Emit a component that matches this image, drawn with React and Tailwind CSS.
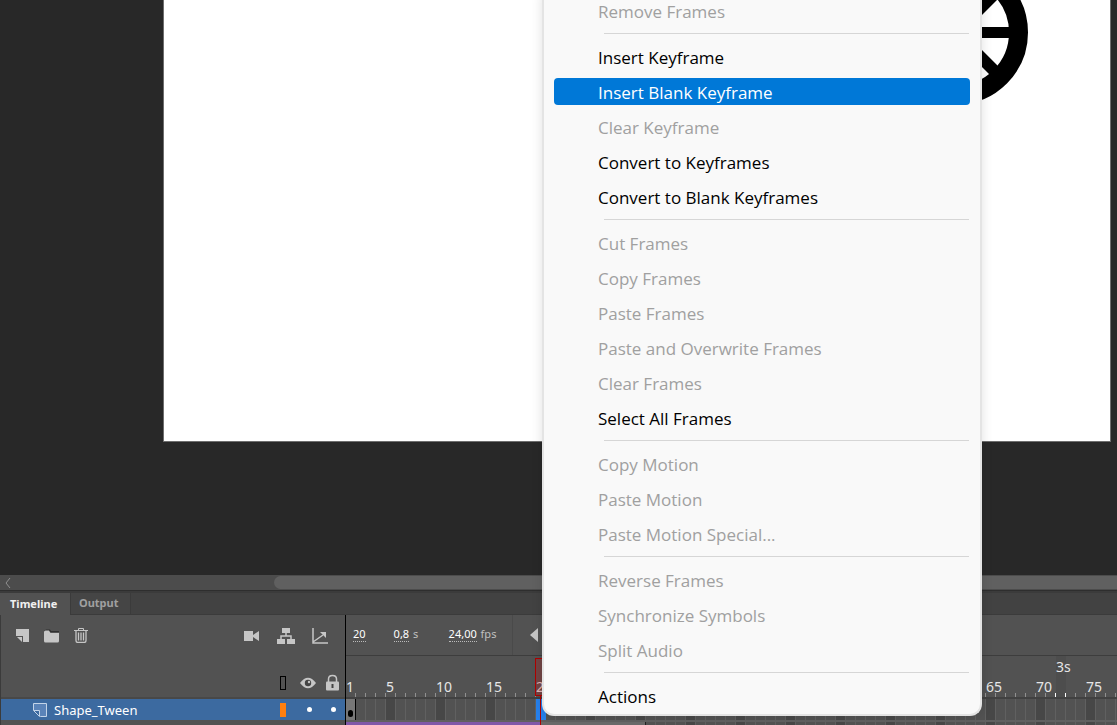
const menuGroups = [
  [{ label: 'Remove Frames', disabled: true }],
  [
    { label: 'Insert Keyframe' },
    { label: 'Insert Blank Keyframe', active: true },
    { label: 'Clear Keyframe', disabled: true },
    { label: 'Convert to Keyframes' },
    { label: 'Convert to Blank Keyframes' },
  ],
  [
    { label: 'Cut Frames', disabled: true },
    { label: 'Copy Frames', disabled: true },
    { label: 'Paste Frames', disabled: true },
    { label: 'Paste and Overwrite Frames', disabled: true },
    { label: 'Clear Frames', disabled: true },
    { label: 'Select All Frames' },
  ],
  [
    { label: 'Copy Motion', disabled: true },
    { label: 'Paste Motion', disabled: true },
    { label: 'Paste Motion Special...', disabled: true },
  ],
  [
    { label: 'Reverse Frames', disabled: true },
    { label: 'Synchronize Symbols', disabled: true },
    { label: 'Split Audio', disabled: true },
  ],
  [{ label: 'Actions' }],
];

const frames = Array.from({ length: 78 }, (_, i) => i + 1);

const ContextMenu = () => (
  <div
    role="menu"
    className="absolute bottom-[9px] left-[542px] w-[440px] rounded-b-xl border-2 border-t-0 border-[#e4e4e4] bg-[#f9f9f9] shadow-[0_0_12px_rgba(0,0,0,0.12)] font-['Open_Sans','Noto_Sans',sans-serif]"
  >
    {menuGroups.map((group, idx) => (
      <div key={idx} role="group">
        {idx > 0 && (
          <div className="h-[11px] pt-[5px] pl-[60px] pr-[11px]">
            <div className="h-px bg-[#d6d6d6]" />
          </div>
        )}
        {group.map((item) => (
          <div key={item.label} className="h-[35px] px-2.5 py-1">
            <button
              type="button"
              role="menuitem"
              disabled={item.disabled}
              className={`flex h-[27px] w-full items-center rounded pl-11 pt-0.5 text-left text-[17px] leading-6 ${
                item.active ? 'bg-[#0078d7] text-white' :
                item.disabled ? 'text-[#a0a0a0]' :
                'text-black'
              }`}
            >
              {item.label}
            </button>
          </div>
        ))}
      </div>
    ))}
    <div className="h-px" />
  </div>
);

const Stage = () => (
  <main className="min-h-0 flex-1 bg-[#282828] pl-[163px] pr-1.5">
    <div className="h-[442px] overflow-hidden border-b border-l border-r border-[#6e6e6e] bg-white">
      <svg className="ml-[719px] h-[106px] w-[150px]" viewBox="883 0 150 106" fill="none" stroke="#000" aria-hidden="true">
        <circle cx="956" cy="32.5" r="62.5" strokeWidth="19" />
        <path d="M896 32.5H1016" strokeWidth="11" />
        <path d="M956 -28V93M914 -9.5L998 74.5M998 -9.5L914 74.5" strokeWidth="12" />
      </svg>
    </div>
  </main>
);

const LayerTools = () => (
  <div className="flex h-[41px] items-center justify-between pl-3.5 pr-[17px]">
    <div className="flex items-center gap-3.5">
      <button type="button" aria-label="New layer">
        <svg width="15" height="14" viewBox="0 0 15 14">
          <path d="M1 0h13v13H8V7H1z" fill="#c6c6c6" />
          <path d="M2 8h5v5z" fill="#c6c6c6" />
        </svg>
      </button>
      <button type="button" aria-label="New folder">
        <svg width="16" height="14" viewBox="0 0 16 14">
          <path d="M0 1.5h1l1-1h4l1 1.5h8v1H0z" fill="#303030" />
          <path d="M0 3q0-1.5 1.5-1.5H5L6.5 4H15v8q0 1.5-1.5 1.5h-12Q0 13.500 0 12z" fill="#c6c6c6" />
        </svg>
      </button>
      <button type="button" aria-label="Delete">
        <svg width="14" height="15" viewBox="0 0 14 15" fill="none" stroke="#c6c6c6">
          <path d="M0 2.500h14M4.500 2V.5h5V2" />
          <path d="M2 3v9.500q0 2 2 2h6q2 0 2-2V3M4.500 4.500v8M7 4.500v8M9.500 4.500v8" strokeWidth="1.300" />
        </svg>
      </button>
    </div>
    <div className="flex items-center gap-[17px]">
      <button type="button" aria-label="Camera">
        <svg width="16" height="12" viewBox="0 0 16 12" fill="#c6c6c6">
          <path d="M0 1h9v10H0zM9 5l6-4v10l-6-4z" />
        </svg>
      </button>
      <button type="button" aria-label="Layer parenting">
        <svg width="18" height="18" viewBox="0 0 18 18">
          <path d="M5 1h8v5H5zM0 12h8v5H0zM10 12h8v5h-8z" fill="#c6c6c6" />
          <path d="M9 6v3M4 12V9h10v3" fill="none" stroke="#c6c6c6" strokeWidth="1.500" />
        </svg>
      </button>
      <button type="button" aria-label="Layer depth">
        <svg width="16" height="17" viewBox="0 0 16 17">
          <path d="M1 1v15h15M1 15L11 8" fill="none" stroke="#c6c6c6" strokeWidth="1.500" />
          <path d="M8 5h6v6z" fill="#c6c6c6" />
        </svg>
      </button>
    </div>
  </div>
);

const LayerColumns = () => (
  <div className="flex flex-1 items-end justify-end pb-[5px] pr-1.5">
    <button type="button" aria-label="Outline all layers" className="mb-0.5 h-3.5 w-1.5 border border-black" />
    <button type="button" aria-label="Show or hide layers" className="ml-3.5">
      <svg width="16" height="18" viewBox="0 0 16 18">
        <path d="M0 9q8-10.500 16 0q-8 10.500-16 0z" fill="#c6c6c6" />
        <circle cx="8" cy="9" r="3.200" fill="#444" />
        <circle cx="9" cy="8" r="1.200" fill="#c6c6c6" />
      </svg>
    </button>
    <button type="button" aria-label="Lock layers" className="ml-2.5">
      <svg width="13" height="18" viewBox="0 0 13 18">
        <path d="M2.500 9V5q0-3.500 4-3.500t4 3.500v4" fill="none" stroke="#c6c6c6" strokeWidth="1.500" />
        <rect y="7.500" width="13" height="9" rx="1" fill="#c6c6c6" />
        <path d="M6.500 10v4" stroke="#444" strokeWidth="2" />
      </svg>
    </button>
  </div>
);

const LayerRow = () => (
  <div className="flex h-[21px] items-center bg-[#3c6aa0] pl-[31px] pr-1.5">
    <svg width="16" height="16" viewBox="0 0 16 16" fill="#5a83b8" stroke="#c3d4e8" aria-hidden="true">
      <path d="M1.500 1.500h13v13H8.500L1.500 8z" />
      <path d="M1.500 8.500h6v6z" fill="#3c6aa0" />
    </svg>
    <span className="ml-1.5 flex-1 text-[13px] leading-5 text-white">Shape_Tween</span>
    <button type="button" aria-label="Layer colour" className="h-3.5 w-1.5 bg-[#ff7f0e]" />
    <button type="button" aria-label="Toggle visibility" className="ml-[21px] h-[5px] w-[5px] rounded-full bg-white" />
    <button type="button" aria-label="Toggle lock" className="ml-[19px] mr-[3px] h-[5px] w-[5px] rounded-full bg-white" />
  </div>
);

const Playback = () => (
  <div className="flex h-[41px] items-center border-b border-[#3d3d3d] text-[11px] leading-[14px] text-[#c0c0c0]">
    <div className="flex h-full w-[167px] items-center border-r border-[#4a4a4a] pb-0.5 pl-[7px]">
      <button type="button" className="border-b border-dotted border-[#bbb] text-white">20</button>
      <span className="ml-7 w-[55px] whitespace-nowrap">
        <button type="button" className="mr-px border-b border-dotted border-[#bbb] text-white">0,8</button> s
      </span>
      <span className="whitespace-nowrap">
        <button type="button" className="mr-px border-b border-dotted border-[#bbb] text-white">24,00</button> fps
      </span>
    </div>
    <button type="button" aria-label="Step back" className="ml-[17px]">
      <svg width="8" height="14" viewBox="0 0 8 14">
        <path d="M0 7l8-7v14z" fill="#c6c6c6" />
      </svg>
    </button>
  </div>
);

const Ruler = () => (
  <div className="flex flex-1 text-sm leading-5 text-[#e6e6e6]">
    {frames.map((n) => (
      <div key={n} className={`flex w-2.5 shrink-0 flex-col justify-end ${n === 72 ? 'bg-[#4d4d4d]' : ''}`}>
        {n % 24 === 0 && <span className="w-0 whitespace-nowrap">{n / 24}s</span>}
        <span className="flex h-5 items-end justify-between">
          <span className="w-0 self-start whitespace-nowrap">{n === 1 || n % 5 === 0 ? n : ''}</span>
          <span className={`h-1 w-px ${n === 71 || n === 72 ? 'bg-white' : 'bg-[#909090]'}`} />
        </span>
      </div>
    ))}
  </div>
);

const FrameRow = () => (
  <div className="flex h-[21px]">
    {frames.map((n) => (
      <div
        key={n}
        className={`flex w-2.5 shrink-0 items-end justify-center border-r pb-[3px] ${
          n === 1 ? 'border-black bg-[#777]' :
          n === 20 ? 'border-[#2680eb] bg-[#2680eb]' :
          n % 5 === 0 ? 'border-[#606060] bg-[#474747]' :
          'border-[#606060] bg-[#525252]'
        }`}
      >
        {n === 1 && <span className="h-[7px] w-[5px] rounded-sm bg-black" />}
      </div>
    ))}
  </div>
);

const TweenRow = () => (
  <div className="flex h-[3px] shrink-0">
    <div className="w-[195px] shrink-0 bg-[#8058a8]" />
    <div className="w-[105px] shrink-0 border-r border-[#222] bg-[#6a6a6a]" />
    {frames.slice(30).map((n) => (
      <div
        key={n}
        className={`w-2.5 shrink-0 border-r border-[#606060] ${n % 5 === 0 ? 'bg-[#474747]' : 'bg-[#525252]'}`}
      />
    ))}
  </div>
);

const Timeline = () => (
  <section className="shrink-0 bg-[#525252]">
    <div className="flex h-[22px] border-b border-[#3b3b3b] bg-[#424242] text-xs">
      <button type="button" className="h-[22px] w-[71px] border-r border-[#3b3b3b] bg-[#525252] pl-2.5 text-left text-[11px] font-bold text-[#f0f0f0]">Timeline</button>
      <button type="button" className="w-[60px] border-r border-[#3b3b3b] bg-[#454545] pl-2 text-left text-[11px] font-bold text-[#a0a0a0]">Output</button>
    </div>
    <div className="flex overflow-hidden">
      <div className="flex h-[110px] w-[346px] shrink-0 flex-col border-l border-r border-l-[#3b3b3b] border-r-black">
        <LayerTools />
        <LayerColumns />
        <div className="h-0.5 bg-[#484848]" />
        <LayerRow />
        <div className="h-[5px] bg-[#525252]" />
      </div>
      <div className="relative flex h-[110px] min-w-0 flex-1 flex-col overflow-hidden">
        <Playback />
        <Ruler />
        <div className="h-0.5 bg-[#414141]" />
        <FrameRow />
        <div className="h-0.5 shrink-0 bg-[#606060]" />
        <TweenRow />
        <div className="absolute bottom-0 left-[189px] top-[43px] flex w-[11px] flex-col items-center">
          <div className="h-[38px] w-full border border-[#b00000] bg-[#d02020]/25" />
          <div className="w-px flex-1 bg-[#b00000]" />
        </div>
      </div>
    </div>
  </section>
);

export default function App() {
  return (
    <div className="relative flex h-screen flex-col overflow-hidden bg-[#282828] font-['Noto_Sans','Open_Sans',sans-serif]">
      <Stage />
      <div className="flex h-4 shrink-0 items-center border-b border-[#2e2e2e] bg-[#4c4c4c] pl-1">
        <svg width="8" height="12" viewBox="0 0 8 12" fill="none" stroke="#909090" aria-hidden="true">
          <path d="M6 1L2 6l4 5" />
        </svg>
        <div className="ml-[262px] h-[13px] flex-1 rounded-l-full bg-[#606060]" />
      </div>
      <div className="h-0.5 shrink-0 bg-[#3b3b3b]" />
      <Timeline />
      <ContextMenu />
    </div>
  );
}
